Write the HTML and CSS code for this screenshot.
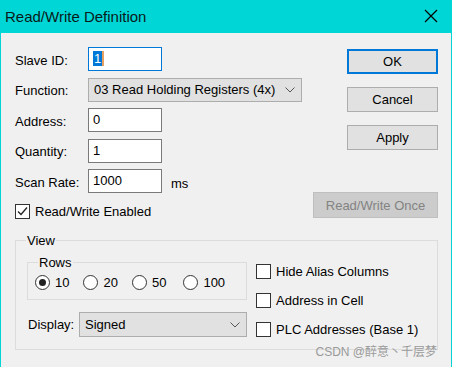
FILE: index.html
```html
<!DOCTYPE html>
<html lang="en">
  <head>
    <meta charset="UTF-8" />
    <meta name="viewport" content="width=device-width, initial-scale=1.0" />
    <title>Read/Write Definition</title>
    <link rel="stylesheet" href="styles.css">
  </head>
  <body>
    <div class="window">
      <div class="titlebar">
        <span class="title">Read/Write Definition</span>
        <svg class="close" width="14" height="14" viewBox="0 0 14 14">
          <path d="M1 1 L13 13 M13 1 L1 13" stroke="#000" stroke-width="1.2" fill="none" />
        </svg>
      </div>

      <div class="content">
        <div class="top">
          <div class="form">
            <label class="label">Slave ID:</label>
            <div class="field focused"><span class="sel">1</span></div>

            <label class="label">Function:</label>
            <div class="combo wide">
              <span>03 Read Holding Registers (4x)</span>
              <svg class="chev" width="10" height="6" viewBox="0 0 10 6">
                <path d="M0.5 0.5 L5 5 L9.5 0.5" stroke="#555" stroke-width="1" fill="none" />
              </svg>
            </div>

            <label class="label">Address:</label>
            <div class="field">0</div>

            <label class="label">Quantity:</label>
            <div class="field">1</div>

            <label class="label">Scan Rate:</label>
            <div class="field-row">
              <div class="field">1000</div>
              <span class="unit">ms</span>
            </div>
          </div>

          <div class="actions">
            <button class="btn default">OK</button>
            <button class="btn">Cancel</button>
            <button class="btn">Apply</button>
            <button class="btn disabled">Read/Write Once</button>
          </div>
        </div>

        <div class="check enabled">
          <span class="box">
            <svg width="13" height="13" viewBox="0 0 13 13">
              <path d="M2 6.5 L5 9.5 L11 2.5" stroke="#222" stroke-width="1.3" fill="none" />
            </svg>
          </span>
          Read/Write Enabled
        </div>

        <fieldset class="group view">
          <legend>View</legend>
          <div class="view-body">
            <div class="view-left">
              <fieldset class="group rows">
                <legend>Rows</legend>
                <div class="radios">
                  <span class="radio on"><i></i>10</span>
                  <span class="radio"><i></i>20</span>
                  <span class="radio"><i></i>50</span>
                  <span class="radio last"><i></i>100</span>
                </div>
              </fieldset>
              <div class="display-row">
                <span>Display:</span>
                <div class="combo display">
                  <span>Signed</span>
                  <svg class="chev" width="10" height="6" viewBox="0 0 10 6">
                    <path d="M0.5 0.5 L5 5 L9.5 0.5" stroke="#555" stroke-width="1" fill="none" />
                  </svg>
                </div>
              </div>
            </div>
            <div class="view-right">
              <div class="check"><span class="box"></span>Hide Alias Columns</div>
              <div class="check"><span class="box"></span>Address in Cell</div>
              <div class="check"><span class="box"></span>PLC Addresses (Base 1)</div>
            </div>
          </div>
        </fieldset>

        <div class="watermark">CSDN @醉意丶千层梦</div>
      </div>
    </div>
  </body>
</html>
```

FILE: styles.css
```css
/* Page */
body {
  margin: 0;
  font-family: "Liberation Sans", Arial, sans-serif;
  font-size: 13px;
  color: #000;
  background-color: #f0f0f0;
}

.window {
  width: 450px;
  height: 367px;
  border-left: 1px solid #00d4d4;
  border-right: 1px solid #00d4d4;
  background-color: #f0f0f0;
  position: relative;
}

/* Title bar */
.titlebar {
  height: 33px;
  background-color: #00d6d6;
  display: flex;
  align-items: center;
  justify-content: space-between;
  padding: 0 14px 0 5px;
  margin: 0 -1px;
}

.title {
  font-size: 15px;
  color: #0a1a1a;
  margin-top: -1px;
}

.close {
  margin-top: -2px;
}

/* Content */
.content {
  padding: 14px 13px 0 14px;
}

.top {
  display: flex;
  justify-content: space-between;
}

.form {
  display: grid;
  grid-template-columns: 73px auto;
  grid-auto-rows: 24px;
  row-gap: 6.5px;
  align-items: center;
}

.label {
  padding-top: 2px;
}

.field {
  width: 74px;
  height: 24px;
  box-sizing: border-box;
  background: #fff;
  border: 1px solid #7a7a7a;
  padding: 2px 4px;
  line-height: 18px;
}

.field.focused {
  border-color: #0078d7;
}

.sel {
  background: #0078d7;
  color: #fff;
  padding: 0 1px;
  border-right: 2px solid #e8a060;
}

.field-row {
  display: flex;
  align-items: center;
  gap: 9px;
}

.unit {
  padding-top: 4px;
}

.combo {
  height: 24px;
  box-sizing: border-box;
  background: #e1e1e1;
  border: 1px solid #adadad;
  display: flex;
  align-items: center;
  justify-content: space-between;
  padding: 0 6px 0 5px;
}

.combo.wide {
  width: 214px;
}

.combo.display {
  width: 168px;
  height: 25px;
}

/* Buttons */
.actions {
  display: flex;
  flex-direction: column;
  align-items: flex-end;
  padding-top: 2px;
}

.btn {
  width: 91px;
  height: 25px;
  margin-bottom: 13px;
  background: #e1e1e1;
  border: 1px solid #adadad;
  font-family: inherit;
  font-size: 13px;
  color: #000;
  padding: 0;
}

.btn.default {
  border: 2px solid #0078d7;
}

.btn.disabled {
  width: 125px;
  height: 26px;
  margin-top: 29px;
  margin-bottom: 0;
  background: #cccccc;
  border-color: #bfbfbf;
  color: #838383;
}

/* Checkboxes */
.check {
  display: flex;
  align-items: center;
  gap: 5px;
  height: 16px;
}

.check.enabled {
  margin-top: -15px;
}

.box {
  width: 15px;
  height: 15px;
  box-sizing: border-box;
  border: 1px solid #333;
  background: #fff;
  display: flex;
  align-items: center;
  justify-content: center;
}

/* Group boxes */
.group {
  border: 1px solid #dcdcdc;
  margin: 0;
  padding: 0 11px;
  min-width: 0;
}

.group legend {
  padding: 0 1px;
  margin-left: -1px;
}

.view {
  margin-top: 14px;
  padding-bottom: 12px;
  width: 423px;
  box-sizing: border-box;
}

.view-body {
  display: flex;
  gap: 9px;
}

.view-left {
  width: 220px;
  flex-shrink: 0;
}

.rows {
  margin-top: 7px;
  height: 45px;
  width: 220px;
  box-sizing: border-box;
}

.radios {
  display: flex;
  margin-left: -4px;
  padding-top: 5px;
}

.radio {
  display: flex;
  align-items: center;
  gap: 5px;
  margin-right: 14px;
}

.radio.last {
  margin-left: 3px;
  margin-right: 0;
}

.radio i {
  width: 15px;
  height: 15px;
  box-sizing: border-box;
  border: 1px solid #333;
  border-radius: 50%;
  background: #fff;
  display: flex;
  align-items: center;
  justify-content: center;
}

.radio.on i::after {
  content: "";
  width: 7px;
  height: 7px;
  border-radius: 50%;
  background: #222;
}

.display-row {
  display: flex;
  align-items: center;
  justify-content: space-between;
  margin-top: 12px;
  margin-left: 1px;
}

.view-right {
  display: flex;
  flex-direction: column;
  gap: 13px;
  padding-top: 15px;
}

/* Watermark overlay */
.watermark {
  position: absolute;
  right: 14px;
  top: 342px;
  font-size: 12px;
  color: #9a9a9a;
  font-family: "Liberation Sans", "Noto Sans CJK SC", sans-serif;
}
```
